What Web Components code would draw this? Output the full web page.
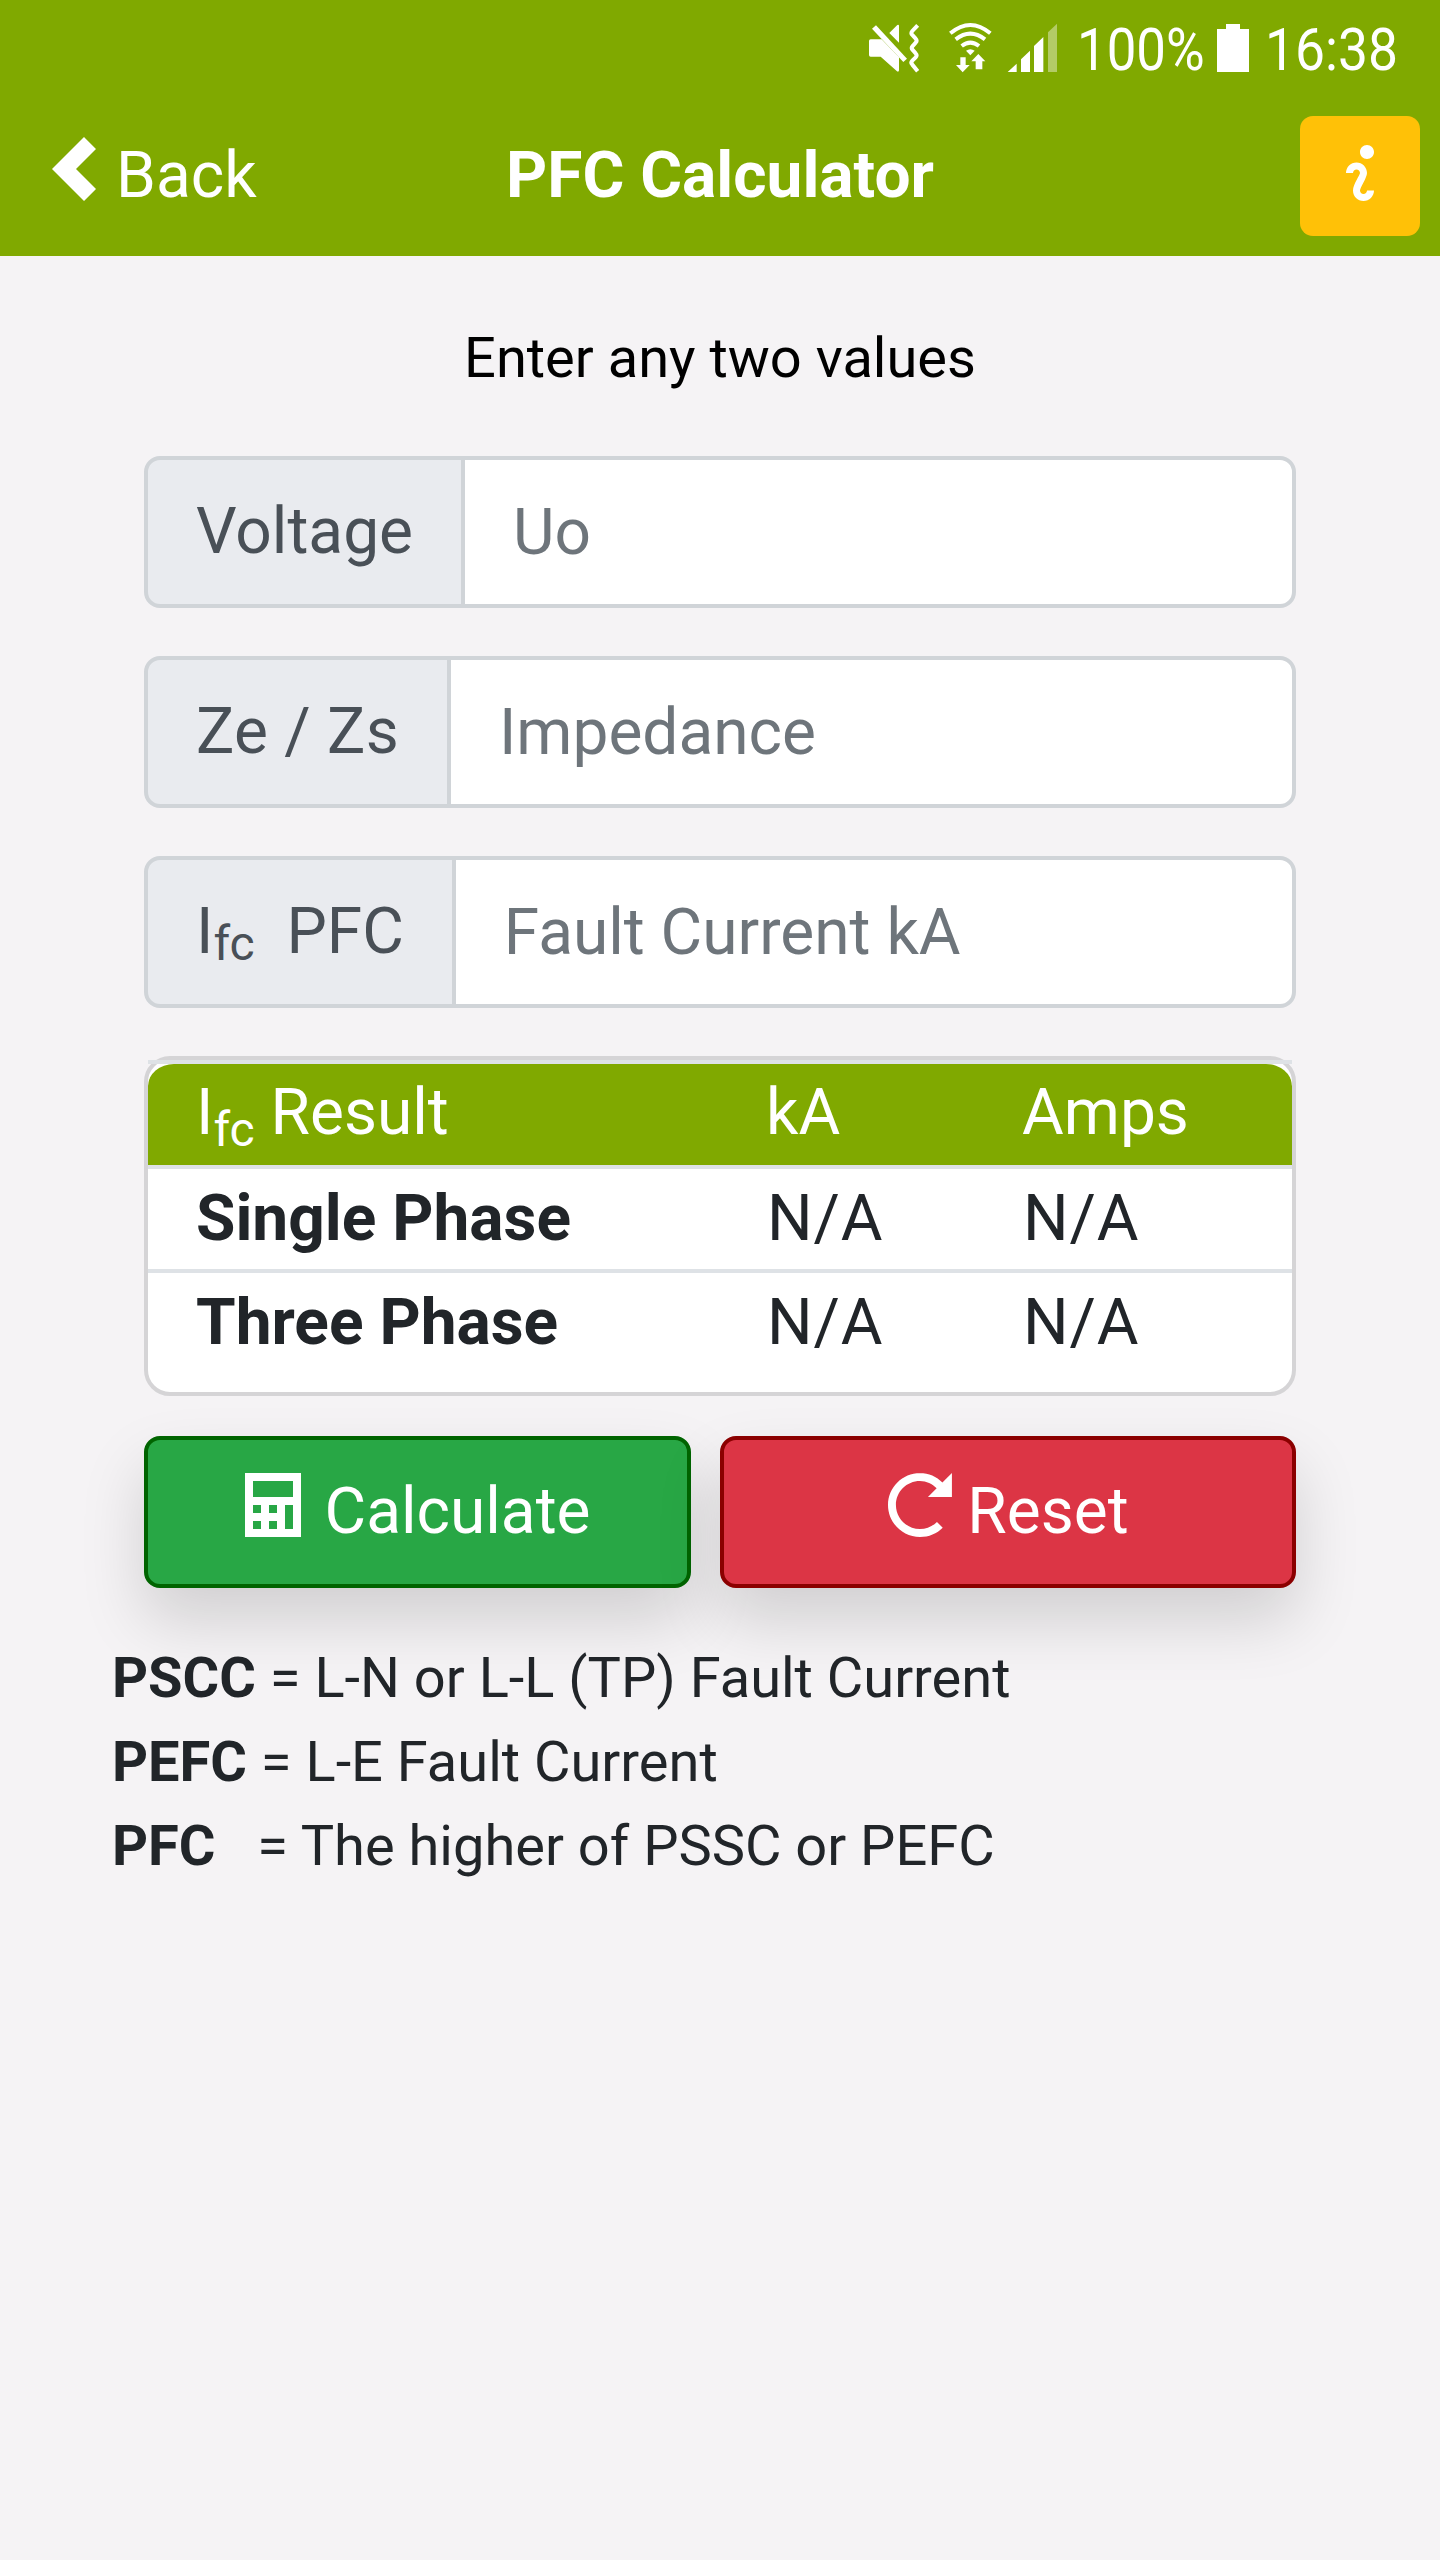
<!DOCTYPE html>
<html lang="en">
<head>
<meta charset="utf-8">
<title>PFC Calculator</title>
<style>
    body {
        margin: 0;
        min-height: 2560px;
        background: #f5f3f5;
        color: #212529;
        font: 64px/96px Roboto, sans-serif;
    }
</style>
</head>
<body>
<pfc-app></pfc-app>
<script>
"use strict";

const icons = {
    'chevron-left': 'M5 0l-4 4 4 4 1.5-1.5-2.5-2.5 2.5-2.5-1.5-1.5z',
    'info': 'M5 0c-.55 0-1 .45-1 1s.45 1 1 1 1-.45 1-1-.45-1-1-1zm-1.5 2.5c-.83 0-1.5.67-1.5 1.5h1c0-.28.22-.5.5-.5s.5.22.5.5-1 1.64-1 2.5c0 .86.67 1.5 1.5 1.5s1.5-.67 1.5-1.5h-1c0 .28-.22.5-.5.5s-.5-.22-.5-.5c0-.36 1-1.84 1-2.5 0-.81-.67-1.5-1.5-1.5z',
    'calculator': 'M0 0v8h7v-8h-7zM1 1h5v2h-5zM1 4h1v1h-1zM3 4h1v1h-1zM5 4h1v3h-1zM1 6h1v1h-1zM3 6h1v1h-1z',
    'reload': 'M4 0c-2.2 0-4 1.8-4 4s1.8 4 4 4c1.1 0 2.12-.43 2.84-1.16l-.72-.72c-.54.54-1.29.88-2.13.88-1.66 0-3-1.34-3-3s1.34-3 3-3c.83 0 1.55.36 2.09.91l-1.09 1.09h3v-3l-1.19 1.19c-.72-.72-1.71-1.19-2.81-1.19z'
};

class PfcElement extends HTMLElement {
    constructor() {
        super();
        this.attachShadow({ mode: 'open' });
    }
    connectedCallback() {
        this.shadowRoot.innerHTML = this.render();
    }
}

class PfcIcon extends PfcElement {
    render() {
        return `
            <style>
                :host { display: block; flex: none; width: 64px; height: 64px; }
                svg { display: block; width: 100%; height: 100%; }
            </style>
            <svg viewBox="0 0 8 8" fill="currentColor" fill-rule="evenodd"><path d="${icons[this.getAttribute('name')]}"/></svg>
        `;
    }
}
customElements.define('pfc-icon', PfcIcon);

class StatusBar extends PfcElement {
    render() {
        return `
            <style>
                :host {
                    display: flex;
                    justify-content: flex-end;
                    height: 96px;
                    box-sizing: border-box;
                    padding-right: 41px;
                    background: #80a900;
                    color: #fff;
                    font-size: 60px;
                    line-height: 100px;
                }
                svg { display: block; flex: none; }
                .level { width: 140px; margin-left: 17px; }
                .time { width: 134px; margin-left: 16px; }
                .level span, .time span {
                    display: inline-block;
                    transform-origin: 0 0;
                    transform: scaleX(.88);
                }
                .time span { transform: scaleX(.89); }
            </style>
            <svg width="200" height="96" viewBox="0 -30 600 288" fill="#fff">
                <path d="M32 88h33L117 142v39q-1 6-6 3L62 140H32q-5 0-5-5V93q0-5 5-5z"/>
                <path d="M36 56l12-10 93 100-11 10z"/>
                <path d="M88 69l24-24q5-2 5 3v50z"/>
                <path d="M173 46l-16 17q-6 7 0 12l10 11q6 6 0 12l-9 10q-6 6 0 12l9 10q6 6 0 12l-10 10q-6 6 0 12l16 20" fill="none" stroke="#fff" stroke-width="12"/>
                <g fill="none" stroke="#fff" stroke-width="12">
                    <path d="M271 70Q331 20 391 70"/>
                    <path d="M287 88Q331 54 375 88"/>
                    <path d="M305 108Q331 88 357 108"/>
                </g>
                <path d="M318 122q13-9 26 0l-13 14z"/>
                <path d="M301 142h16v23h12l-21 22-20-22h13z"/>
                <path d="M347 178v-24h-13l21-22 21 22h-9v24z"/>
                <path d="M443 186l27-25v25zM483 186v-38l27-26v64zM522 186v-78l28-27v105z"/>
                <path d="M564 186v-119l27-26v145z" opacity=".4"/>
            </svg>
            <div class="level"><span>100%</span></div>
            <svg width="32" height="96" viewBox="0 0 32 96" fill="#fff"><path d="M0 29h9v-5h14v5h9v43h-32z"/></svg>
            <div class="time"><span>16:38</span></div>
        `;
    }
}
customElements.define('status-bar', StatusBar);

class NavHeader extends PfcElement {
    render() {
        return `
            <style>
                :host {
                    display: grid;
                    grid-template-columns: 1fr auto 1fr;
                    align-items: center;
                    height: 160px;
                    box-sizing: border-box;
                    padding: 0 20px 0 44px;
                    background: #80a900;
                    color: #fff;
                }
                .back { display: flex; align-items: center; gap: 8px; }
                .back pfc-icon { margin-bottom: 14px; }
                h1 { margin: 0 24px 0 0; font: inherit; font-weight: 700; }
                button {
                    justify-self: end;
                    display: flex;
                    align-items: center;
                    justify-content: center;
                    width: 120px;
                    height: 120px;
                    padding: 0 0 6px;
                    border: 0;
                    border-radius: 13px;
                    background: #ffc107;
                    color: #fff;
                }
                button pfc-icon { width: 56px; height: 56px; }
            </style>
            <div class="back"><pfc-icon name="chevron-left"></pfc-icon><span>Back</span></div>
            <h1><slot></slot></h1>
            <button><pfc-icon name="info"></pfc-icon></button>
        `;
    }
}
customElements.define('nav-header', NavHeader);

class InputGroup extends PfcElement {
    render() {
        return `
            <style>
                :host { display: flex; height: 152px; margin-bottom: 48px; }
                label, input {
                    box-sizing: border-box;
                    border: 4px solid #d0d4d8;
                    padding: 0 48px;
                }
                label {
                    display: flex;
                    align-items: center;
                    flex: none;
                    margin-right: -4px;
                    border-radius: 16px 0 0 16px;
                    background: #e9ebef;
                    color: #495057;
                    white-space: pre;
                }
                input {
                    flex: 1;
                    min-width: 0;
                    padding-top: 2px;
                    border-radius: 0 16px 16px 0;
                    background: #fff;
                    font: inherit;
                }
                input::placeholder { color: #6e757b; opacity: 1; }
            </style>
            <label><slot></slot></label><input placeholder="${this.getAttribute('placeholder')}">
        `;
    }
}
customElements.define('input-group', InputGroup);

class ResultTable extends PfcElement {
    render() {
        const row = (name) => `<div class="row"><b>${name}</b><span>N/A</span><span>N/A</span></div>`;
        return `
            <style>
                :host {
                    display: block;
                    box-sizing: border-box;
                    height: 340px;
                    border: 4px solid #d5d4d6;
                    border-radius: 26px;
                    background: #fff;
                }
                .row {
                    display: grid;
                    grid-template-columns: 571px 256px 1fr;
                    box-sizing: border-box;
                    height: 104px;
                    padding: 2px 0 0 48px;
                    border-top: 4px solid #dee2e6;
                }
                .row:not(.head) span { letter-spacing: .8px; }
                .head {
                    grid-template-columns: 570px 256px 1fr;
                    height: 105px;
                    padding-top: 1px;
                    background: #80a900;
                    background-clip: padding-box;
                    border-top-color: transparent;
                    border-radius: 26px 26px 0 0;
                    color: #fff;
                }
                .line { height: 4px; margin-bottom: -4px; background: #dee2e6; }
                sub { font-size: 75%; line-height: 0; position: relative; bottom: -.25em; vertical-align: baseline; }
            </style>
            <div class="line"></div>
            <div class="row head"><span>I<sub>fc</sub> Result</span><span>kA</span><span>Amps</span></div>
            ${row('Single Phase')}
            ${row('Three Phase')}
        `;
    }
}
customElements.define('result-table', ResultTable);

class ActionButton extends PfcElement {
    render() {
        return `
            <style>
                :host { display: block; }
                button {
                    display: flex;
                    align-items: center;
                    justify-content: center;
                    width: 100%;
                    height: 152px;
                    box-sizing: border-box;
                    padding: 0;
                    border: 4px solid var(--edge);
                    border-radius: 16px;
                    background: var(--fill);
                    box-shadow: 0 32px 64px rgba(0, 0, 0, .15);
                    color: #fff;
                    font: inherit;
                }
                pfc-icon { margin: 0 15px 14px 1px; }
            </style>
            <button><pfc-icon name="${this.getAttribute('icon')}"></pfc-icon><slot></slot></button>
        `;
    }
}
customElements.define('action-button', ActionButton);

class PfcApp extends PfcElement {
    render() {
        return `
            <style>
                :host { display: block; }
                main { padding: 60px 144px 0; }
                .hint { margin: 0 0 56px; font-size: 56px; line-height: 84px; color: #000; text-align: center; }
                .zs { letter-spacing: .25px; }
                .actions { display: grid; grid-template-columns: 547px 576px; gap: 29px; margin-top: 40px; }
                .calculate { --fill: #28a745; --edge: #006400; }
                .reset { --fill: #dc3545; --edge: #8b0000; }
                .legend { position: relative; margin: 48px -32px 0; font-size: 56px; line-height: 84px; }
                .legend p { margin: 0; white-space: pre; }
                sub { font-size: 48px; line-height: 72px; vertical-align: baseline; position: relative; bottom: -12px; }
            </style>
            <status-bar></status-bar>
            <nav-header>PFC Calculator</nav-header>
            <main>
                <p class="hint">Enter any two values</p>
                <input-group placeholder="Uo">Voltage</input-group>
                <input-group class="zs" placeholder="Impedance">Ze / Zs</input-group>
                <input-group placeholder="Fault Current kA">I<sub>fc</sub>&nbsp; PFC</input-group>
                <result-table></result-table>
                <div class="actions">
                    <action-button class="calculate" icon="calculator">Calculate</action-button>
                    <action-button class="reset" icon="reload">Reset</action-button>
                </div>
                <div class="legend">
                    <p><b>PSCC</b> = L-N or L-L (TP) Fault Current</p>
                    <p><b>PEFC</b> = L-E Fault Current</p>
                    <p><b>PFC</b> &nbsp; = The higher of PSSC or PEFC</p>
                </div>
            </main>
        `;
    }
}
customElements.define('pfc-app', PfcApp);
</script>
</body>
</html>
